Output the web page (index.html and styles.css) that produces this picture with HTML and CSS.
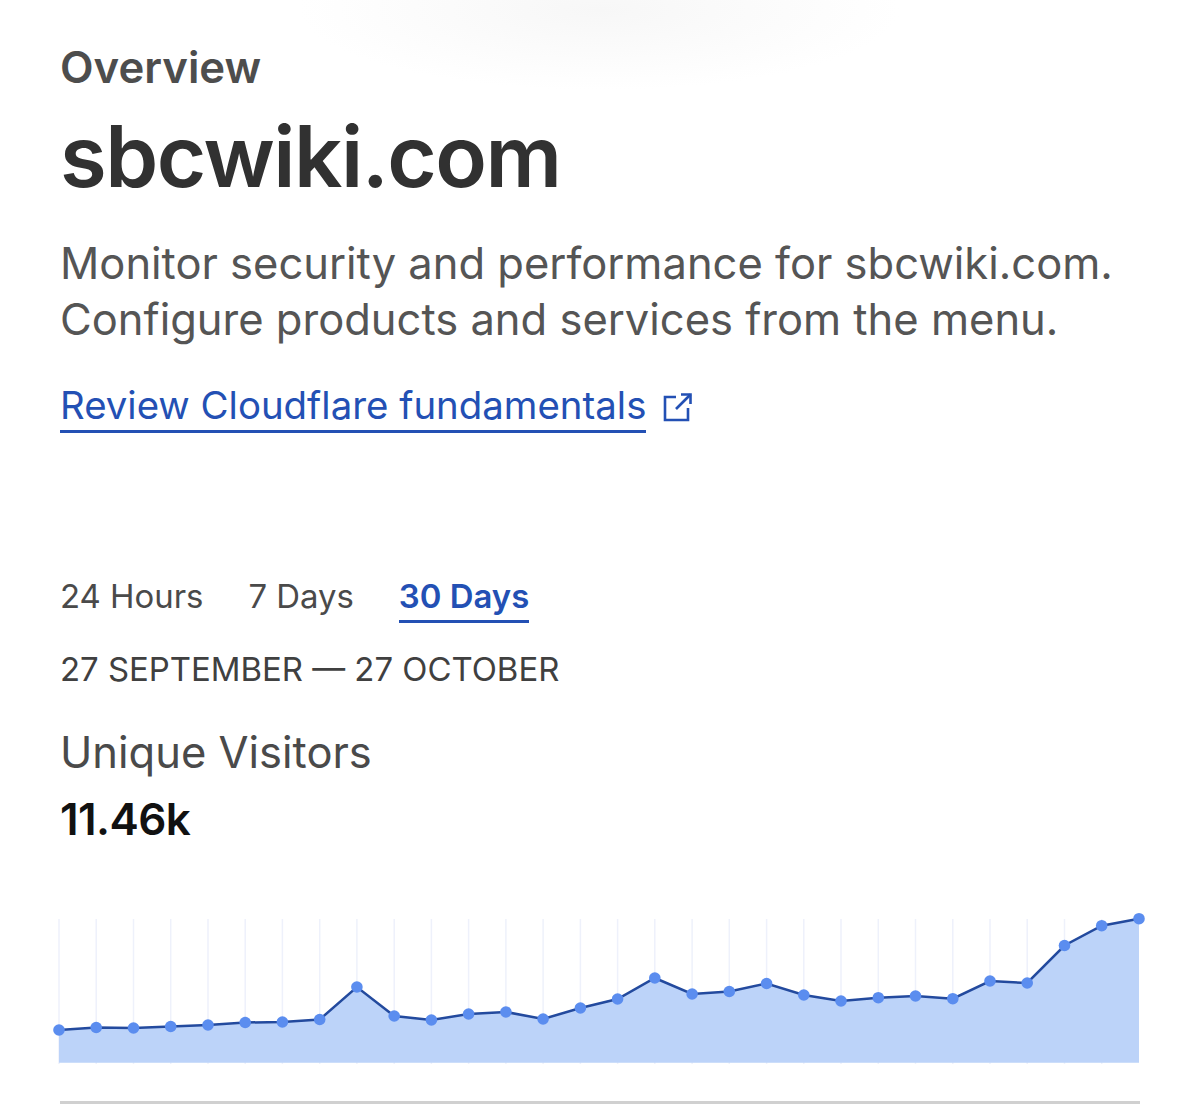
FILE: index.html
```html
<!DOCTYPE html>
<html lang="en">
<head>
  <meta charset="UTF-8" />
  <meta name="viewport" content="width=device-width, initial-scale=1" />
  <title>sbcwiki.com Overview</title>
  <link rel="stylesheet" href="styles.css">
</head>
<body>
  <div class="top-shadow"></div>
  <main class="page">
    <!-- Zone header -->
    <header class="zone-header">
      <p class="eyebrow">Overview</p>
      <h1>sbcwiki.com</h1>
      <p class="intro">Monitor security and performance for sbcwiki.com.<br>Configure products and services from the menu.</p>
      <div class="link-row">
        <a class="docs-link" href="#">Review Cloudflare fundamentals</a>
        <svg class="ext-icon" viewBox="0 0 30 30" fill="none" stroke="currentColor" stroke-width="2.6">
          <path d="M13 5H2v23h23V16"/>
          <path d="M13 17 27.5 2.5"/>
          <path d="M18 2.5h9.5V12"/>
        </svg>
      </div>
    </header>

    <!-- Time range -->
    <nav class="tabs">
      <a class="tab" href="#">24 Hours</a>
      <a class="tab" href="#">7 Days</a>
      <a class="tab active" href="#">30 Days</a>
    </nav>
    <p class="range">27 SEPTEMBER — 27 OCTOBER</p>

    <!-- Unique visitors -->
    <section class="stat">
      <h2>Unique Visitors</h2>
      <p class="stat-value">11.46k</p>
    </section>

    <svg class="chart" viewBox="0 0 1100 160" width="1100" height="160">
      <g class="grid">
        <path d="M9 9V154M46.200 9V154M83.500 9V154M120.700 9V154M158 9V154M195.200 9V154M232.400 9V154M269.700 9V154M306.900 9V154M344.200 9V154M381.400 9V154M418.600 9V154M455.900 9V154M493.100 9V154M530.400 9V154M567.600 9V154M604.800 9V154M642.100 9V154M679.300 9V154M716.600 9V154M753.800 9V154M791 9V154M828.300 9V154M865.500 9V154M902.800 9V154M940 9V154M977.200 9V154M1014.500 9V154M1051.700 9V154"/>
      </g>
      <path class="area" d="M9 120L46.200 117.500L83.500 118L120.700 116.500L158 115L195.200 112.500L232.400 112L269.700 109.500L306.900 77L344.200 106L381.400 110L418.600 104L455.900 102L493.100 109L530.400 98L567.600 89L604.800 68L642.100 84L679.300 81.500L716.600 73.500L753.800 85L791 91L828.300 87.700L865.500 86L902.800 88.700L940 71L977.200 73L1014.500 35.500L1051.700 15.700L1089 8.700V152.700H9Z"/>
      <polyline class="line" points="9,120 46.200,117.500 83.500,118 120.700,116.500 158,115 195.200,112.500 232.400,112 269.700,109.500 306.900,77 344.200,106 381.400,110 418.600,104 455.900,102 493.100,109 530.400,98 567.600,89 604.800,68 642.100,84 679.300,81.500 716.600,73.500 753.800,85 791,91 828.300,87.700 865.500,86 902.800,88.700 940,71 977.200,73 1014.500,35.500 1051.700,15.700 1089,8.700"/>
      <g class="dots">
        <circle cx="9" cy="120" r="5.800"/><circle cx="46.200" cy="117.500" r="5.800"/><circle cx="83.500" cy="118" r="5.800"/><circle cx="120.700" cy="116.500" r="5.800"/><circle cx="158" cy="115" r="5.800"/><circle cx="195.200" cy="112.500" r="5.800"/><circle cx="232.400" cy="112" r="5.800"/><circle cx="269.700" cy="109.500" r="5.800"/><circle cx="306.900" cy="77" r="5.800"/><circle cx="344.200" cy="106" r="5.800"/><circle cx="381.400" cy="110" r="5.800"/><circle cx="418.600" cy="104" r="5.800"/><circle cx="455.900" cy="102" r="5.800"/><circle cx="493.100" cy="109" r="5.800"/><circle cx="530.400" cy="98" r="5.800"/><circle cx="567.600" cy="89" r="5.800"/><circle cx="604.800" cy="68" r="5.800"/><circle cx="642.100" cy="84" r="5.800"/><circle cx="679.300" cy="81.500" r="5.800"/><circle cx="716.600" cy="73.500" r="5.800"/><circle cx="753.800" cy="85" r="5.800"/><circle cx="791" cy="91" r="5.800"/><circle cx="828.300" cy="87.700" r="5.800"/><circle cx="865.500" cy="86" r="5.800"/><circle cx="902.800" cy="88.700" r="5.800"/><circle cx="940" cy="71" r="5.800"/><circle cx="977.200" cy="73" r="5.800"/><circle cx="1014.500" cy="35.500" r="5.800"/><circle cx="1051.700" cy="15.700" r="5.800"/><circle cx="1089" cy="8.700" r="5.800"/>
      </g>
    </svg>
    <div class="divider"></div>
  </main>
</body>
</html>
```

FILE: styles.css
```css
html, body {
  height: 100%;
}

body {
  margin: 0;
  background-color: #fff;
  font-family: Inter, "Liberation Sans", sans-serif;
  color: #4a4a4a;
  overflow: hidden;
  position: relative;
}

p, h1, h2 {
  margin: 0;
}

a {
  text-decoration: none;
  color: inherit;
}

.top-shadow {
  position: absolute;
  top: -70px;
  left: 300px;
  width: 600px;
  height: 160px;
  background: radial-gradient(closest-side, #f7f7f7, #fff);
}

.page {
  position: relative;
  padding: 42px 60px 0;
}

.eyebrow {
  font-size: 43.700px;
  line-height: 52px;
  font-weight: 600;
  color: #4d4d4d;
}

h1 {
  font-size: 85px;
  line-height: 96px;
  font-weight: 600;
  letter-spacing: -1.500px;
  color: #313131;
  margin-top: 15px;
}

.intro {
  font-size: 43.500px;
  line-height: 56px;
  color: #555;
  margin-top: 30px;
}

.link-row {
  display: flex;
  align-items: center;
  gap: 17px;
  margin-top: 33px;
  color: #2350b4;
}

.docs-link {
  font-size: 38.400px;
  line-height: 50px;
  border-bottom: 3px solid #2350b4;
}

.ext-icon {
  width: 30px;
  height: 30px;
}

.tabs {
  display: flex;
  gap: 45px;
  margin-top: 142px;
}

.tab {
  font-size: 32.900px;
  line-height: 42px;
  padding-bottom: 3px;
  color: #4a4a4a;
}

.tab.active {
  font-weight: 600;
  color: #2350b4;
  border-bottom: 3px solid #2350b4;
}

.range {
  font-size: 32.900px;
  line-height: 42px;
  color: #404040;
  margin-top: 25px;
}

.stat {
  margin-top: 36px;
}

.stat h2 {
  font-size: 43.500px;
  line-height: 52px;
  font-weight: 400;
  color: #4a4a4a;
}

.stat-value {
  font-size: 44px;
  line-height: 56px;
  font-weight: 600;
  letter-spacing: -0.600px;
  color: #111;
  margin-top: 13px;
}

.chart {
  display: block;
  margin: 63px 0 0 -10px;
  overflow: visible;
}

.grid path {
  stroke: #eef1fb;
  stroke-width: 1.500;
}

.area {
  fill: #bcd3f9;
}

.line {
  fill: none;
  stroke: #234a9e;
  stroke-width: 2.500;
}

.dots circle {
  fill: #5b8def;
}

.divider {
  height: 3px;
  background-color: #d0d0d0;
  margin-top: 31px;
  width: 1080px;
}
```
